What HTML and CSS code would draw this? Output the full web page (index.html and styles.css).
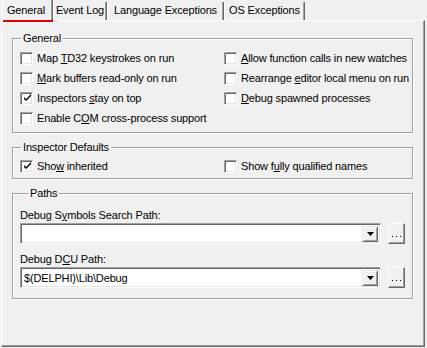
FILE: index.html
```html
<!DOCTYPE html>
<html>
<head>
<meta charset="utf-8">
<link rel="stylesheet" href="styles.css">
</head>
<body>
<div class="tabs">
  <div class="tab active t-general">General</div>
  <div class="tab t-event">Event Log</div>
  <div class="tab t-lang">Language Exceptions</div>
  <div class="tab t-os">OS Exceptions</div>
</div>
<div class="panel">
  <fieldset class="group g-general">
    <legend>General</legend>
    <div class="opts">
      <label class="opt"><span class="cb"></span><span class="txt">Map <u>T</u>D32 keystrokes on run</span></label>
      <label class="opt"><span class="cb"></span><span class="txt"><u>A</u>llow function calls in new watches</span></label>
      <label class="opt"><span class="cb"></span><span class="txt"><u>M</u>ark buffers read-only on run</span></label>
      <label class="opt"><span class="cb"></span><span class="txt">Rearrange <u>e</u>ditor local menu on run</span></label>
      <label class="opt"><span class="cb checked"><svg width="9" height="9" viewBox="0 0 9 9"><path d="M1 3v2l2 2 5-5V0L3 5z" fill="#000"/></svg></span><span class="txt">Inspectors <u>s</u>tay on top</span></label>
      <label class="opt"><span class="cb"></span><span class="txt"><u>D</u>ebug spawned processes</span></label>
      <label class="opt"><span class="cb"></span><span class="txt">Enable C<u>O</u>M cross-process support</span></label>
    </div>
  </fieldset>
  <fieldset class="group g-insp">
    <legend>Inspector Defaults</legend>
    <div class="opts">
      <label class="opt"><span class="cb checked"><svg width="9" height="9" viewBox="0 0 9 9"><path d="M1 3v2l2 2 5-5V0L3 5z" fill="#000"/></svg></span><span class="txt">Sho<u>w</u> inherited</span></label>
      <label class="opt"><span class="cb"></span><span class="txt">Show f<u>u</u>lly qualified names</span></label>
    </div>
  </fieldset>
  <fieldset class="group g-paths">
    <legend>Paths</legend>
    <div class="lbl">Debug S<u>y</u>mbols Search Path:</div>
    <div class="row">
      <div class="combo"><span class="val"></span><span class="drop"><svg width="7" height="4" viewBox="0 0 7 4"><path d="M0 0h7L3.5 4z" fill="#000"/></svg></span></div>
      <div class="btn"><svg width="9" height="1" viewBox="0 0 9 1"><path d="M0 0h1v1H0zM4 0h1v1H4zM8 0h1v1H8z" fill="#000"/></svg></div>
    </div>
    <div class="lbl">Debug D<u>C</u>U Path:</div>
    <div class="row">
      <div class="combo"><span class="val">$(DELPHI)\Lib\Debug</span><span class="drop"><svg width="7" height="4" viewBox="0 0 7 4"><path d="M0 0h7L3.5 4z" fill="#000"/></svg></span></div>
      <div class="btn"><svg width="9" height="1" viewBox="0 0 9 1"><path d="M0 0h1v1H0zM4 0h1v1H4zM8 0h1v1H8z" fill="#000"/></svg></div>
    </div>
  </fieldset>
</div>
</body>
</html>
```

FILE: styles.css
```css
html, body {
  margin: 0;
  padding: 0;
  background: #f0f0f0;
  width: 427px;
  height: 348px;
  overflow: hidden;
  font-family: "Liberation Sans", Arial, sans-serif;
  font-size: 11px;
  letter-spacing: -0.15px;
  color: #000;
}
.tabs {
  display: flex;
  height: 20px;
  padding-left: 2px;
}
.tab {
  height: 18px;
  margin-top: 2px;
  line-height: 17px;
  text-align: center;
  box-sizing: border-box;
  white-space: nowrap;
  border-right: 1px solid #696969;
  box-shadow: inset -1px 0 0 #a0a0a0;
  border-left: 1px solid #fff;
}
.t-general { width: 51px; }
.t-event { width: 54px; }
.t-lang { width: 117px; }
.t-os { width: 81px; }
.tab.active {
  margin-top: 0;
  height: 20px;
  line-height: 21px;
  padding-right: 3px;
  position: relative;
}
.tab.active::after {
  content: "";
  position: absolute;
  left: 0;
  right: -1px;
  bottom: -2px;
  height: 2px;
  background: #e00000;
}
.panel {
  margin-left: 1px;
  width: 424px;
  border-top: 1px solid #fff;
  border-left: 1px solid #fff;
  border-right: 1px solid #696969;
  border-bottom: 1px solid #696969;
  box-shadow: inset -1px -1px 0 #a0a0a0;
  padding: 11px 11px 0 10px;
  box-sizing: border-box;
  height: 327px;
}
.group {
  margin: 0;
  padding: 0;
  border: 1px solid #a0a0a0;
  box-shadow: 1px 1px 0 #fff, inset 1px 1px 0 #fff;
  min-width: 0;
}
.group legend {
  margin-left: 8px;
  padding: 0 2px;
  line-height: 13px;
}
.opts {
  display: grid;
  grid-template-columns: 204px 1fr;
  padding-left: 7px;
}
.g-general .opts { padding-top: 3px; padding-bottom: 4px; }
.g-insp { margin-top: 8px; }
.g-insp .opts { padding-top: 2px; padding-bottom: 2px; }
.g-paths { margin-top: 8px; padding: 9px 0 9px 7px; }
.opt {
  display: flex;
  align-items: center;
  height: 20px;
  white-space: nowrap;
}
.txt { white-space: pre; }
.cb {
  width: 11px;
  height: 11px;
  margin-right: 4px;
  background: #fff;
  border-top: 1px solid #a0a0a0;
  border-left: 1px solid #a0a0a0;
  border-right: 1px solid #fff;
  border-bottom: 1px solid #fff;
  box-shadow: inset 1px 1px 0 #696969, inset -1px -1px 0 #e3e3e3;
  display: flex;
  align-items: center;
  justify-content: center;
  flex: none;
}
.cb svg { margin: 1px 0 0 1px; }
.lbl { line-height: 13px; height: 13px; }
.row {
  display: flex;
  align-items: center;
  margin: 1px 0 1px;
}
.row + .lbl { margin-top: 9px; }
.combo {
  width: 361px;
  height: 21px;
  box-sizing: border-box;
  background: #fff;
  border-top: 1px solid #a0a0a0;
  border-left: 1px solid #a0a0a0;
  border-right: 1px solid #fff;
  border-bottom: 1px solid #fff;
  box-shadow: inset 1px 1px 0 #696969, inset -1px -1px 0 #e3e3e3;
  display: flex;
  align-items: center;
  padding: 2px 2px 2px 3px;
}
.val { flex: 1; white-space: nowrap; }
.drop {
  width: 16px;
  height: 16px;
  box-sizing: border-box;
  background: #f0f0f0;
  border-top: 1px solid #e3e3e3;
  border-left: 1px solid #e3e3e3;
  border-right: 1px solid #696969;
  border-bottom: 1px solid #696969;
  box-shadow: inset 1px 1px 0 #fff, inset -1px -1px 0 #a0a0a0;
  display: flex;
  align-items: center;
  justify-content: center;
}
.btn {
  margin-left: 7px;
  width: 17px;
  height: 21px;
  box-sizing: border-box;
  background: #f0f0f0;
  border-top: 1px solid #fff;
  border-left: 1px solid #fff;
  border-right: 1px solid #696969;
  border-bottom: 1px solid #696969;
  box-shadow: inset -1px -1px 0 #a0a0a0;
  display: flex;
  justify-content: center;
  align-items: flex-end;
  padding-bottom: 6px;
}
```
